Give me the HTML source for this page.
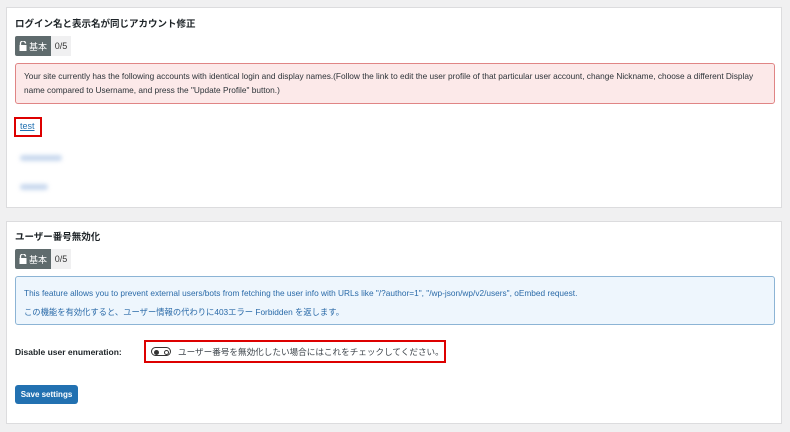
<!DOCTYPE html>
<html><head><meta charset="utf-8"><style>
body{margin:0;width:790px;height:432px;background:#f0f0f1;font-family:"Liberation Sans","Noto Sans CJK JP",sans-serif;position:relative;overflow:hidden;color:#1d2327}
.p{position:absolute;left:6px;width:776px;background:#fff;border:1px solid #dcdcde;box-sizing:border-box}
.a{position:absolute}
h3{position:absolute;margin:0;font-size:9.5px;font-weight:bold;left:8px}
.badge{position:absolute;left:8px;height:20px;display:flex;font-size:9px}
.badge .l{background:#5f6b6d;color:#fff;width:36px;display:flex;align-items:center;justify-content:center;gap:2px;border-radius:2px 0 0 2px}
.badge .r{background:#f0f0f1;color:#333;width:20px;display:flex;align-items:center;justify-content:center}
.n{position:absolute;left:8px;width:760px;box-sizing:border-box;border-radius:3px;font-size:8.6px;line-height:14px;padding:0 8px}
.blur{position:absolute;height:6px;background:#c8d8ee;border-radius:3px;filter:blur(2px)}
</style></head><body>
<div class="p" style="top:7px;height:201px">
<h3 style="top:8px">ログイン名と表示名が同じアカウント修正</h3>
<div class="badge" style="top:28px"><div class="l"><svg width="8" height="10" viewBox="0 0 8 10"><path d="M1.5 4V2.5a2.5 2.5 0 0 1 5 0" stroke="#fff" fill="none" stroke-width="1.3"/><rect x="0.5" y="4" width="7" height="6" fill="#fff"/></svg>基本</div><div class="r">0/5</div></div>
<div class="n" style="top:55px;height:41px;background:#fce9e9;border:1px solid #e08585;padding-top:5px;color:#2c3338;font-size:8.3px;white-space:nowrap">Your site currently has the following accounts with identical login and display names.(Follow the link to edit the user profile of that particular user account, change Nickname, choose a different Display<br>name compared to Username, and press the "Update Profile" button.)</div>
<div class="a" style="left:7px;top:109px;width:28px;height:20px;border:2px solid #d00;box-sizing:border-box"></div>
<div class="a" style="left:13px;top:113px;font-size:9px;color:#2271b1;text-decoration:underline">test</div>
<div class="blur" style="left:13px;top:147px;width:42px"></div>
<div class="blur" style="left:13px;top:176px;width:28px"></div>
</div>
<div class="p" style="top:221px;height:203px">
<h3 style="top:7px">ユーザー番号無効化</h3>
<div class="badge" style="top:27px"><div class="l"><svg width="8" height="10" viewBox="0 0 8 10"><path d="M1.5 4V2.5a2.5 2.5 0 0 1 5 0" stroke="#fff" fill="none" stroke-width="1.3"/><rect x="0.5" y="4" width="7" height="6" fill="#fff"/></svg>基本</div><div class="r">0/5</div></div>
<div class="n" style="top:54px;height:49px;background:#eef6fd;border:1px solid #8cb4d5;color:#2a6aa8;font-size:8.3px;padding-top:7px;line-height:19px">This feature allows you to prevent external users/bots from fetching the user info with URLs like "/?author=1", "/wp-json/wp/v2/users", oEmbed request.<br>この機能を有効化すると、ユーザー情報の代わりに403エラー Forbidden を返します。</div>
<div class="a" style="left:8px;top:125px;font-size:8.5px;font-weight:bold">Disable user enumeration:</div>
<div class="a" style="left:137px;top:118px;width:302px;height:23px;border:2px solid #d00;box-sizing:border-box"></div>
<div class="a" style="left:144px;top:125px;width:20px;height:9px;border:1px solid #333;border-radius:6px;box-sizing:border-box"><div class="a" style="left:2px;top:1.5px;width:5px;height:5px;border-radius:50%;background:#333"></div><div class="a" style="left:12px;top:2px;width:3px;height:3px;border-radius:50%;border:0.7px solid #333"></div></div>
<div class="a" style="left:171px;top:124px;font-size:8.6px;color:#3c434a;white-space:nowrap">ユーザー番号を無効化したい場合にはこれをチェックしてください。</div>
<div class="a" style="left:8px;top:163px;width:63px;height:19px;background:#2271b1;border-radius:3px;color:#fff;font-size:8px;font-weight:bold;display:flex;align-items:center;justify-content:center">Save settings</div>
</div>
</body></html>
